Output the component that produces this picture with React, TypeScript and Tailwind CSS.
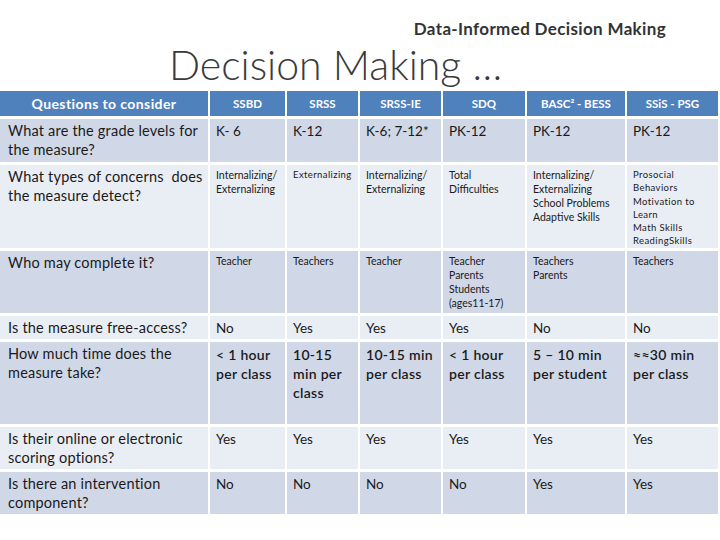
import React from "react";

type Cell = {
  text: string[];
  size?: "q" | "md" | "sm" | "xs";
};

type Row = {
  height: string;
  shade: "dark" | "light";
  question: string[];
  cells: Cell[];
};

const headers = ["SSBD", "SRSS", "SRSS-IE", "SDQ", "BASC² - BESS", "SSiS - PSG"];

const rows: Row[] = [
  {
    height: "h-[43px]",
    shade: "dark",
    question: ["What are the grade levels for", "the measure?"],
    cells: [
      { text: ["K- 6"] },
      { text: ["K-12"] },
      { text: ["K-6; 7-12*"] },
      { text: ["PK-12"] },
      { text: ["PK-12"] },
      { text: ["PK-12"] },
    ],
  },
  {
    height: "h-[83px]",
    shade: "light",
    question: ["What types of concerns  does", "the measure detect?"],
    cells: [
      { text: ["Internalizing/", "Externalizing"], size: "sm" },
      { text: ["Externalizing"], size: "xs" },
      { text: ["Internalizing/", "Externalizing"], size: "sm" },
      { text: ["Total", "Difficulties"], size: "sm" },
      {
        text: ["Internalizing/", "Externalizing", "School Problems", "Adaptive Skills"],
        size: "sm",
      },
      {
        text: ["Prosocial", "Behaviors", "Motivation to", "Learn", "Math Skills", "ReadingSkills"],
        size: "xs",
      },
    ],
  },
  {
    height: "h-[62px]",
    shade: "dark",
    question: ["Who may complete it?"],
    cells: [
      { text: ["Teacher"], size: "sm" },
      { text: ["Teachers"], size: "sm" },
      { text: ["Teacher"], size: "sm" },
      { text: ["Teacher", "Parents", "Students", "(ages11-17)"], size: "sm" },
      { text: ["Teachers", "Parents"], size: "sm" },
      { text: ["Teachers"], size: "sm" },
    ],
  },
  {
    height: "h-[23px]",
    shade: "light",
    question: ["Is the measure free-access?"],
    cells: [
      { text: ["No"] },
      { text: ["Yes"] },
      { text: ["Yes"] },
      { text: ["Yes"] },
      { text: ["No"] },
      { text: ["No"] },
    ],
  },
  {
    height: "h-[82px]",
    shade: "dark",
    question: ["How much time does the", "measure take?"],
    cells: [
      { text: ["< 1 hour", "per class"], size: "q" },
      { text: ["10-15", "min per", "class"], size: "q" },
      { text: ["10-15 min", "per class"], size: "q" },
      { text: ["< 1 hour", "per class"], size: "q" },
      { text: ["5 – 10 min", "per student"], size: "q" },
      { text: ["≈≈30 min", "per class"], size: "q" },
    ],
  },
  {
    height: "h-[42px]",
    shade: "light",
    question: ["Is their online or electronic", "scoring options?"],
    cells: [
      { text: ["Yes"] },
      { text: ["Yes"] },
      { text: ["Yes"] },
      { text: ["Yes"] },
      { text: ["Yes"] },
      { text: ["Yes"] },
    ],
  },
  {
    height: "h-[42px]",
    shade: "dark",
    question: ["Is there an intervention", "component?"],
    cells: [
      { text: ["No"] },
      { text: ["No"] },
      { text: ["No"] },
      { text: ["No"] },
      { text: ["Yes"] },
      { text: ["Yes"] },
    ],
  },
];

const sizeClass = {
  q: "text-[14px] leading-[19px] tracking-[0.3px] font-semibold",
  md: "text-[13.5px] leading-[19px]",
  sm: "text-[10.5px] leading-[14px]",
  xs: "text-[9.5px] leading-[13.3px] tracking-[0.4px]",
};

const cols = "grid grid-cols-[208px_75px_71px_81px_82px_98px_91px] gap-x-[2px]";

const App = () => {
  return (
    <div className="w-[720px] h-[540px] bg-white overflow-hidden font-['Lato',sans-serif] text-[#1a1a1a]">
      <div className="flex justify-end pr-[54px] pt-[19px]">
        <span className="text-[17px] font-bold text-[#333] leading-[20px] tracking-[0.35px]">
          Data-Informed Decision Making
        </span>
      </div>
      <h1 className="pl-[169px] text-[41px] font-light text-[#3a3a3a] leading-[52px]">
        Decision Making …
      </h1>
      <div className="flex flex-col gap-y-[3px] w-[718px]">
        <div className={`${cols} h-[25px]`}>
          <div className="bg-[#4f81bd] text-white font-bold text-[14px] tracking-[0.4px] flex items-center justify-center">
            Questions to consider
          </div>
          {headers.map((h) => (
            <div
              key={h}
              className="bg-[#4f81bd] text-white font-bold text-[11.5px] flex items-center justify-center"
            >
              {h}
            </div>
          ))}
        </div>
        {rows.map((row, i) => (
          <div key={i} className={`${cols} ${row.height}`}>
            <div
              className={`${row.shade === "dark" ? "bg-[#d0d8e8]" : "bg-[#e9edf4]"} pl-[8px] pt-[2px] text-[14.5px] leading-[19px] tracking-[0.2px] whitespace-pre`}
            >
              {row.question.map((l) => (
                <div key={l}>{l}</div>
              ))}
            </div>
            {row.cells.map((c, j) => (
              <div
                key={j}
                className={`${row.shade === "dark" ? "bg-[#d0d8e8]" : "bg-[#e9edf4]"} pl-[6px] pt-[3px] whitespace-nowrap ${sizeClass[c.size ?? "md"]}`}
              >
                {c.text.map((l) => (
                  <div key={l}>{l}</div>
                ))}
              </div>
            ))}
          </div>
        ))}
      </div>
    </div>
  );
};

export default App;
